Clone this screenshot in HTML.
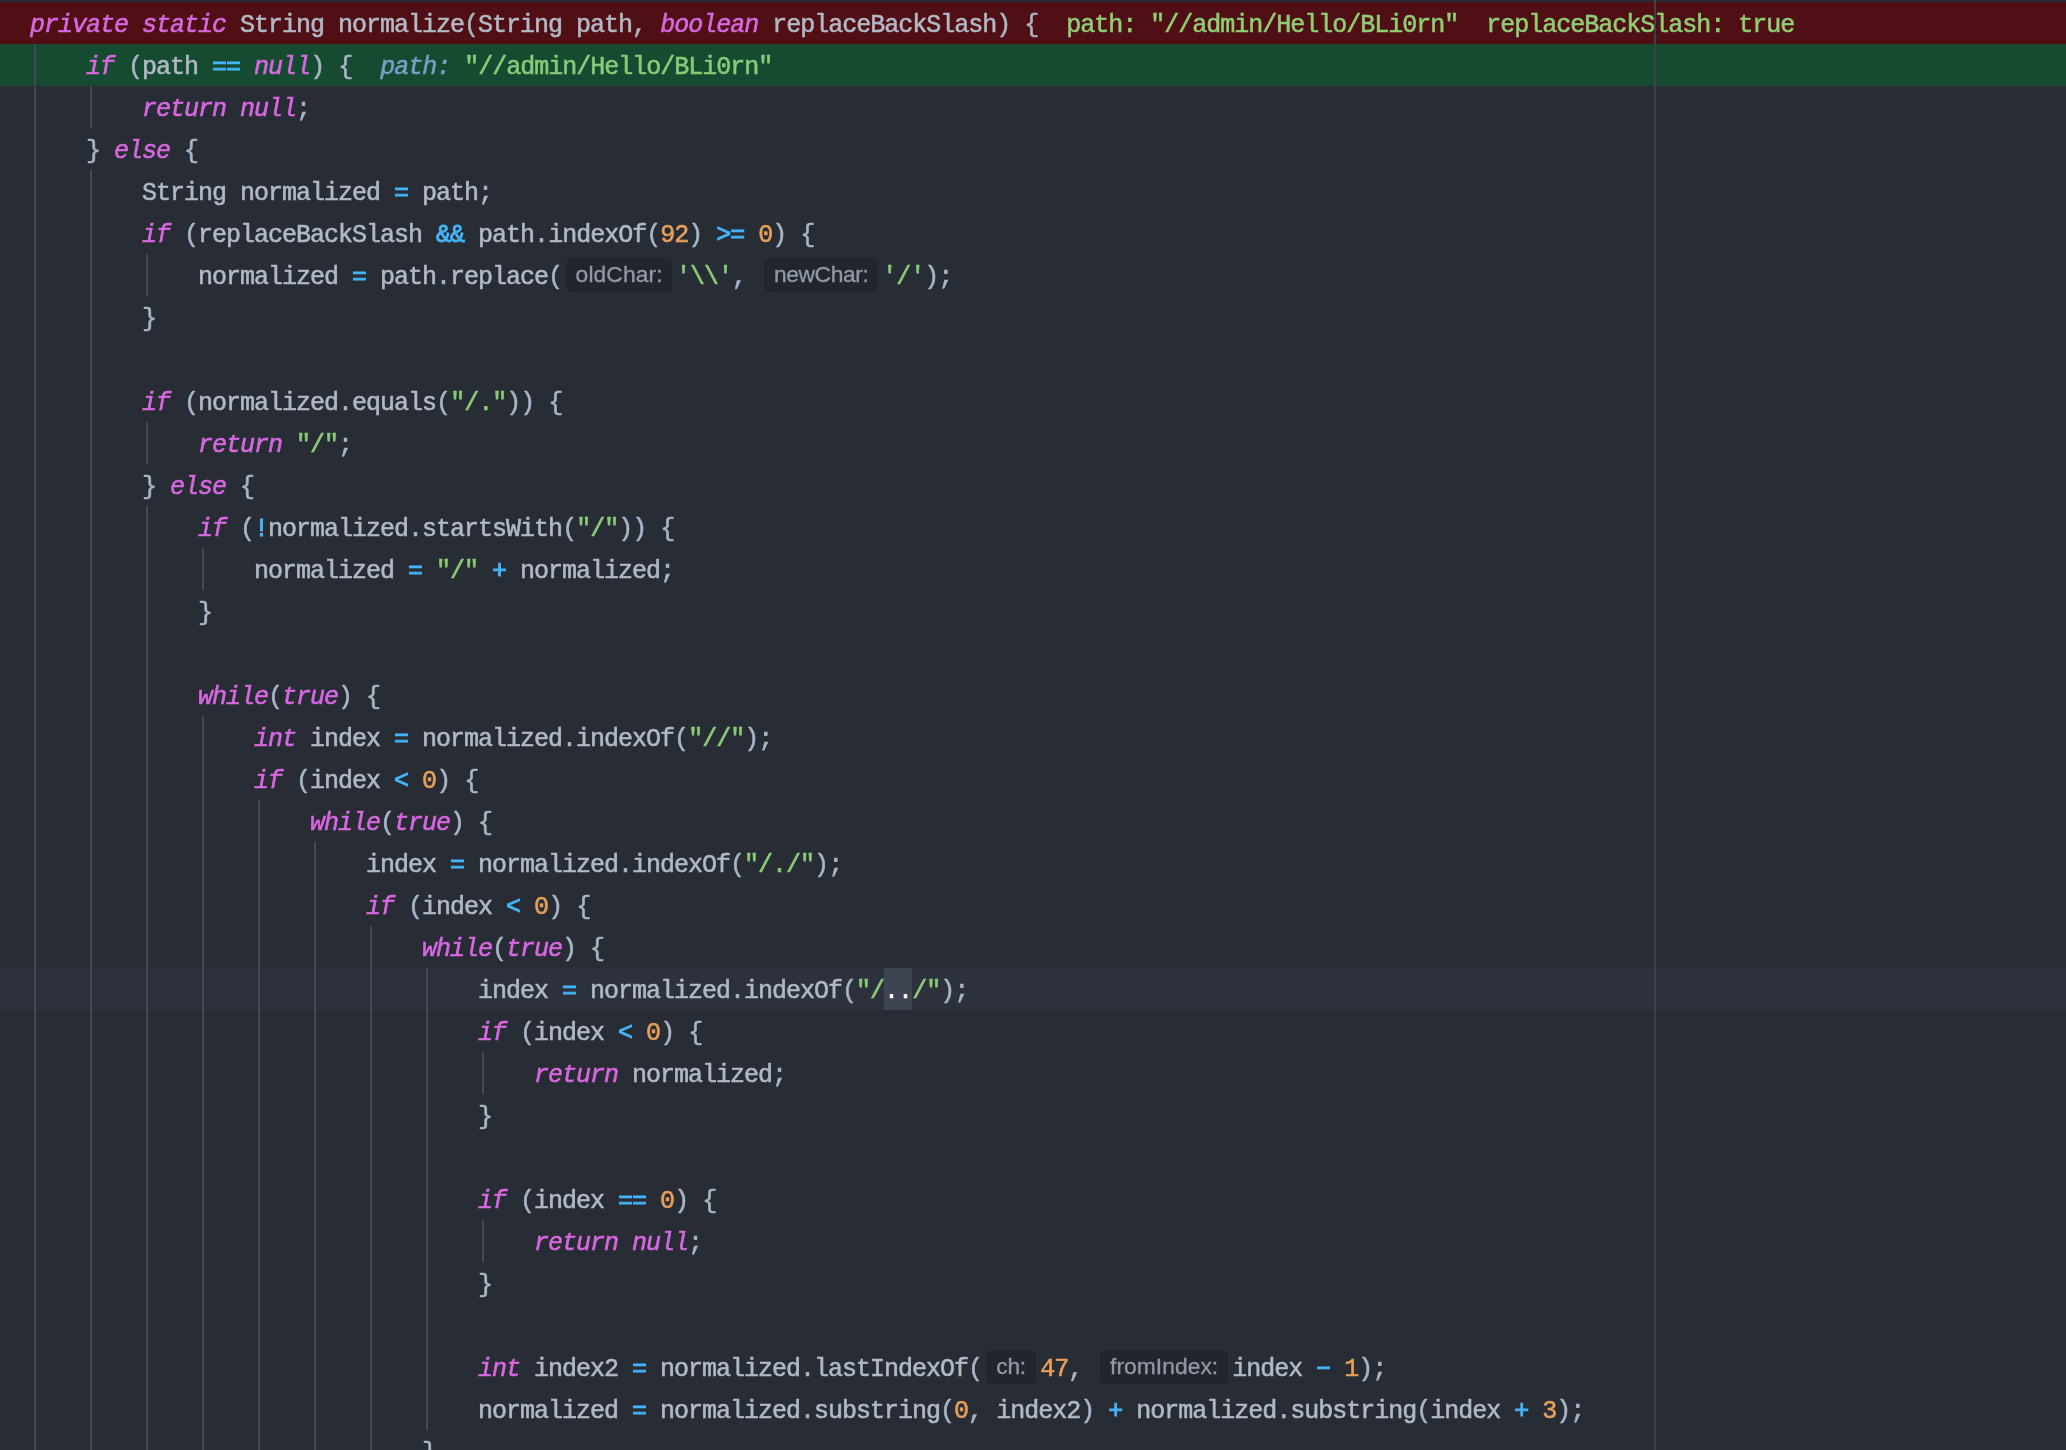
<!DOCTYPE html><html><head><meta charset="utf-8"><title>editor</title><style>

html,body{margin:0;padding:0;}
html,body{width:2066px;height:1450px;overflow:hidden;background:#282c34}
#ed{width:2066px;height:1450px;overflow:hidden;background:#282c34;position:relative;
font-family:"Liberation Mono",monospace;font-size:25.0px;letter-spacing:-1.0024px;color:#b2b9c6;
-webkit-text-stroke:0.55px;}
.l{position:absolute;left:0;width:2066px;height:42px;line-height:48.4px;will-change:transform;white-space:pre;padding-left:30px;box-sizing:border-box;}
.l>i{font-style:normal;position:relative;top:0px;display:block}
.r{background:#4f0f14}
.g{background:#174b31}
.c{background:#2c313c}
.k{color:#d868e2;font-style:italic}
.o{color:#45b5f8;-webkit-text-stroke:0.9px}
.n{color:#e5a15b}
.s{color:#89ca78}
.p{color:#a9b5c4}
.d{color:#8fce72}
.di{color:#7a9ec5;font-style:italic}
.sel{background:#3e4452;color:#fffdf5;display:inline-block;height:42px;vertical-align:top}
.h{display:inline-block;box-sizing:border-box;height:34px;line-height:32.6px;margin:4px 4px;vertical-align:top;background:#22252c;border-radius:6px;
font-family:"Liberation Sans",sans-serif;font-size:22.8px;letter-spacing:0;-webkit-text-stroke:0.35px;color:#9098a6;text-align:center;}
.h b{font-weight:normal}
.v{position:absolute;width:2px;background:#424753}
.m{position:absolute;left:1654px;top:0;width:2px;height:1450px;background:#3b4049}

</style></head><body><div id="ed">
<div class="l r" style="top:2px"><span class="k">private</span> <span class="k">static</span> String normalize<span class="p">(</span>String path<span class="p">,</span> <span class="k">boolean</span> replaceBackSlash<span class="p">)</span> <span class="p">{</span>  <span class="d">path: "//admin/Hello/BLi0rn"  replaceBackSlash: true</span></div>
<div class="l g" style="top:44px">    <span class="k">if</span> <span class="p">(</span>path <span class="o">==</span> <span class="k">null</span><span class="p">)</span> <span class="p">{</span>  <span class="di">path:</span> <span class="s">"//admin/Hello/BLi0rn"</span></div>
<div class="l" style="top:86px">        <span class="k">return</span> <span class="k">null</span><span class="p">;</span></div>
<div class="l" style="top:128px">    <span class="p">}</span> <span class="k">else</span> <span class="p">{</span></div>
<div class="l" style="top:170px">        String normalized <span class="o">=</span> path<span class="p">;</span></div>
<div class="l" style="top:212px">        <span class="k">if</span> <span class="p">(</span>replaceBackSlash <span class="o">&amp;&amp;</span> path<span class="p">.</span>indexOf<span class="p">(</span><span class="n">92</span><span class="p">)</span> <span class="o">&gt;=</span> <span class="n">0</span><span class="p">)</span> <span class="p">{</span></div>
<div class="l" style="top:254px">            normalized <span class="o">=</span> path<span class="p">.</span>replace<span class="p">(</span><span class="h" style="width:106px;letter-spacing:0.1px"><b>oldChar:</b></span><span class="s">'\\'</span><span class="p">,</span> <span class="h" style="width:114px;letter-spacing:-0.4px"><b>newChar:</b></span><span class="s">'/'</span><span class="p">)</span><span class="p">;</span></div>
<div class="l" style="top:296px">        <span class="p">}</span></div>
<div class="l" style="top:338px"></div>
<div class="l" style="top:380px">        <span class="k">if</span> <span class="p">(</span>normalized<span class="p">.</span>equals<span class="p">(</span><span class="s">"/."</span><span class="p">))</span> <span class="p">{</span></div>
<div class="l" style="top:422px">            <span class="k">return</span> <span class="s">"/"</span><span class="p">;</span></div>
<div class="l" style="top:464px">        <span class="p">}</span> <span class="k">else</span> <span class="p">{</span></div>
<div class="l" style="top:506px">            <span class="k">if</span> <span class="p">(</span><span class="o">!</span>normalized<span class="p">.</span>startsWith<span class="p">(</span><span class="s">"/"</span><span class="p">))</span> <span class="p">{</span></div>
<div class="l" style="top:548px">                normalized <span class="o">=</span> <span class="s">"/"</span> <span class="o">+</span> normalized<span class="p">;</span></div>
<div class="l" style="top:590px">            <span class="p">}</span></div>
<div class="l" style="top:632px"></div>
<div class="l" style="top:674px">            <span class="k">while</span><span class="p">(</span><span class="k">true</span><span class="p">)</span> <span class="p">{</span></div>
<div class="l" style="top:716px">                <span class="k">int</span> index <span class="o">=</span> normalized<span class="p">.</span>indexOf<span class="p">(</span><span class="s">"//"</span><span class="p">)</span><span class="p">;</span></div>
<div class="l" style="top:758px">                <span class="k">if</span> <span class="p">(</span>index <span class="o">&lt;</span> <span class="n">0</span><span class="p">)</span> <span class="p">{</span></div>
<div class="l" style="top:800px">                    <span class="k">while</span><span class="p">(</span><span class="k">true</span><span class="p">)</span> <span class="p">{</span></div>
<div class="l" style="top:842px">                        index <span class="o">=</span> normalized<span class="p">.</span>indexOf<span class="p">(</span><span class="s">"/./"</span><span class="p">)</span><span class="p">;</span></div>
<div class="l" style="top:884px">                        <span class="k">if</span> <span class="p">(</span>index <span class="o">&lt;</span> <span class="n">0</span><span class="p">)</span> <span class="p">{</span></div>
<div class="l" style="top:926px">                            <span class="k">while</span><span class="p">(</span><span class="k">true</span><span class="p">)</span> <span class="p">{</span></div>
<div class="l c" style="top:968px">                                index <span class="o">=</span> normalized<span class="p">.</span>indexOf<span class="p">(</span><span class="s">"/</span><span class="sel">..</span><span class="s">/"</span><span class="p">)</span><span class="p">;</span></div>
<div class="l" style="top:1010px">                                <span class="k">if</span> <span class="p">(</span>index <span class="o">&lt;</span> <span class="n">0</span><span class="p">)</span> <span class="p">{</span></div>
<div class="l" style="top:1052px">                                    <span class="k">return</span> normalized<span class="p">;</span></div>
<div class="l" style="top:1094px">                                <span class="p">}</span></div>
<div class="l" style="top:1136px"></div>
<div class="l" style="top:1178px">                                <span class="k">if</span> <span class="p">(</span>index <span class="o">==</span> <span class="n">0</span><span class="p">)</span> <span class="p">{</span></div>
<div class="l" style="top:1220px">                                    <span class="k">return</span> <span class="k">null</span><span class="p">;</span></div>
<div class="l" style="top:1262px">                                <span class="p">}</span></div>
<div class="l" style="top:1304px"></div>
<div class="l" style="top:1346px">                                <span class="k">int</span> index2 <span class="o">=</span> normalized<span class="p">.</span>lastIndexOf<span class="p">(</span><span class="h" style="width:50px;letter-spacing:-0.3px"><b>ch:</b></span><span class="n">47</span><span class="p">,</span> <span class="h" style="width:128px;letter-spacing:0.05px"><b>fromIndex:</b></span>index <span class="o">−</span> <span class="n">1</span><span class="p">)</span><span class="p">;</span></div>
<div class="l" style="top:1388px">                                normalized <span class="o">=</span> normalized<span class="p">.</span>substring<span class="p">(</span><span class="n">0</span><span class="p">,</span> index2<span class="p">)</span> <span class="o">+</span> normalized<span class="p">.</span>substring<span class="p">(</span>index <span class="o">+</span> <span class="n">3</span><span class="p">)</span><span class="p">;</span></div>
<div class="l" style="top:1430px">                            <span class="p">}</span></div>
<div class="v" style="left:34px;top:44px;height:1406px"></div>
<div class="v" style="left:90px;top:86px;height:42px"></div>
<div class="v" style="left:90px;top:170px;height:1280px"></div>
<div class="v" style="left:146px;top:254px;height:42px"></div>
<div class="v" style="left:146px;top:422px;height:42px"></div>
<div class="v" style="left:146px;top:506px;height:944px"></div>
<div class="v" style="left:202px;top:548px;height:42px"></div>
<div class="v" style="left:202px;top:716px;height:734px"></div>
<div class="v" style="left:258px;top:800px;height:650px"></div>
<div class="v" style="left:314px;top:842px;height:608px"></div>
<div class="v" style="left:370px;top:926px;height:524px"></div>
<div class="v" style="left:426px;top:968px;height:462px"></div>
<div class="v" style="left:482px;top:1052px;height:42px"></div>
<div class="v" style="left:482px;top:1220px;height:42px"></div>
<div class="m"></div>
</div></body></html>
